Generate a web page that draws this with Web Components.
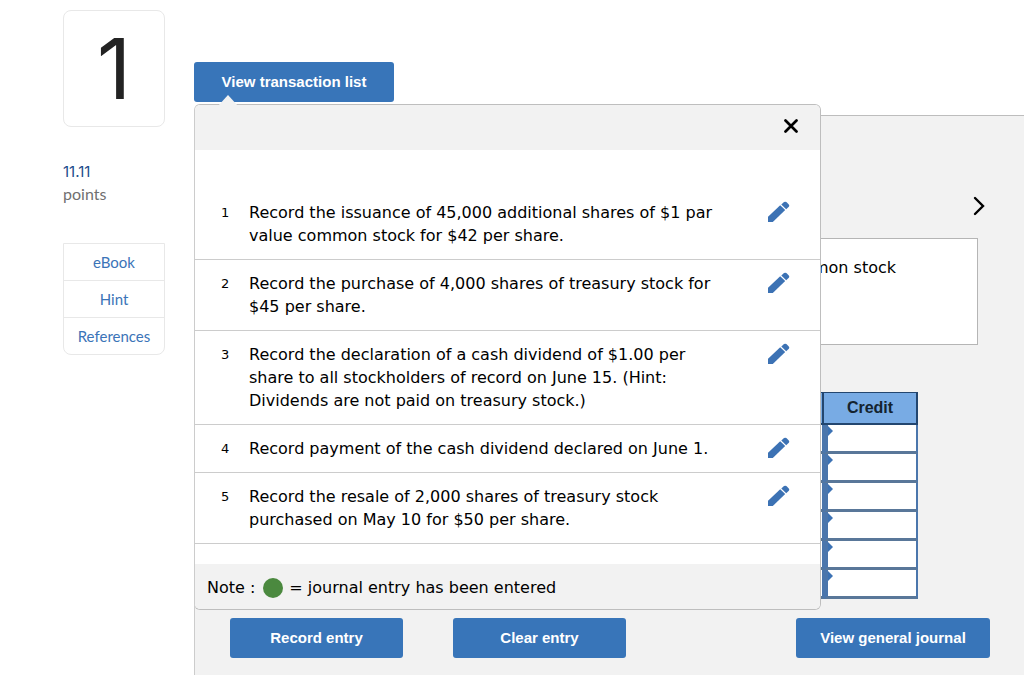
<!DOCTYPE html>
<html lang="en">
<head>
<meta charset="utf-8">
<meta name="viewport" content="width=device-width, initial-scale=1">
<title>General journal</title>
<style>
  body { margin: 0; background: #fff; color: #000; font: 16px/23px "DejaVu Sans", sans-serif; }
</style>
</head>
<body>
<question-page>
  <question-sidebar slot="side" number="1" points="11.11"></question-sidebar>
  <action-button slot="trigger" style="--w:200px">View transaction list</action-button>
  <transaction-popover slot="trigger">
    <transaction-item number="1">Record the issuance of 45,000 additional shares of $1 par value common stock for $42 per share.</transaction-item>
    <transaction-item number="2">Record the purchase of 4,000 shares of treasury stock for $45 per share.</transaction-item>
    <transaction-item number="3">Record the declaration of a cash dividend of $1.00 per share to all stockholders of record on June 15. (Hint: Dividends are not paid on treasury stock.)</transaction-item>
    <transaction-item number="4">Record payment of the cash dividend declared on June 1.</transaction-item>
    <transaction-item number="5">Record the resale of 2,000 shares of treasury stock purchased on May 10 for $50 per share.</transaction-item>
  </transaction-popover>
  <journal-panel>
    <span slot="prompt">common stock</span>
    <action-button slot="actions" style="--w:173px">Record entry</action-button>
    <action-button slot="actions" style="--w:173px">Clear entry</action-button>
    <action-button slot="actions" style="--w:194px; margin-left:auto">View general journal</action-button>
  </journal-panel>
</question-page>

<script>
class BaseElement extends HTMLElement {
  constructor() {
    super();
    this.attachShadow({ mode: "open" });
  }
  connectedCallback() {
    this.shadowRoot.innerHTML = this.render();
  }
}

customElements.define("question-page", class extends BaseElement {
  render() {
    return `<style>
      :host { display: grid; grid-template-columns: 194px minmax(0, 1fr); min-height: 100vh; }
      main { display: flex; flex-direction: column; }
      .bar { position: relative; height: 53px; padding-top: 62px; z-index: 1; }
    </style>
    <slot name="side"></slot>
    <main><div class="bar"><slot name="trigger"></slot></div><slot></slot></main>`;
  }
});

customElements.define("action-button", class extends BaseElement {
  render() {
    return `<style>
      :host { display: block; width: var(--w); }
      button { display: block; width: 100%; height: 40px; padding: 0; border: 0; border-radius: 3px;
        background: #3875b9; color: #fff; font: bold 15px/40px "Liberation Sans", sans-serif; cursor: pointer; }
    </style><button type="button"><slot></slot></button>`;
  }
});

customElements.define("question-sidebar", class extends BaseElement {
  render() {
    return `<style>
      :host { display: block; padding: 10px 29px 0 63px; font: 15px/22px Lato, sans-serif; }
      .number { display: grid; place-items: center; height: 115px; border: 1px solid #e8e8e8; border-radius: 8px;
        color: #232323; font: 84px/115px Inter, sans-serif; }
      .points { margin: 34px 0 38px; font-size: 16px; color: #707070; }
      .points b { display: block; font: 15px/22px Inter, sans-serif; color: #1c4c8c; }
      nav { border: 1px solid #e8e8e8; border-radius: 0 0 8px 8px; text-align: center; }
      a { display: block; line-height: 36px; color: #3b74b8; text-decoration: none; }
      a + a { border-top: 1px solid #e8e8e8; }
    </style>
    <div class="number">${this.getAttribute("number")}</div>
    <div class="points"><b>${this.getAttribute("points")}</b>points</div>
    <nav><a href="#ebook">eBook</a><a href="#hint">Hint</a><a href="#references">References</a></nav>`;
  }
});

customElements.define("transaction-popover", class extends BaseElement {
  render() {
    return `<style>
      :host { display: block; position: absolute; top: 104px; left: 0; box-sizing: border-box; width: 627px;
        background: #fff; border: 1px solid #bebebe; border-left-color: #ccc; border-radius: 6px; }
      .tip { position: absolute; left: 23px; top: -10px; display: block; }
      header { display: flex; justify-content: flex-end; height: 45px; background: #f2f2f2; border-radius: 5px 5px 0 0; }
      header button { width: 58px; height: 41px; padding: 0; border: 0; background: none; display: grid; place-items: center; }
      .list { padding: 39px 0 20px; }
      footer { display: flex; align-items: center; height: 45px; padding: 2px 12px 0; box-sizing: border-box;
        background: #f2f2f2; border-radius: 0 0 5px 5px; }
      i { width: 20px; height: 20px; margin: 0 6px 0 8px; border-radius: 50%; background: #4b893f; }
    </style>
    <svg class="tip" width="20" height="11"><path d="M0 11L10 0L20 11Z" fill="#f2f2f2"/></svg>
    <header><button type="button" aria-label="Close"><svg width="14" height="14" viewBox="0 0 14 14"><path d="M1.5 1.5l11 11M12.5 1.5l-11 11" stroke="#000" stroke-width="2.7" stroke-linecap="round"/></svg></button></header>
    <div class="list"><slot></slot></div>
    <footer><span>Note :</span><i></i><span>= journal entry has been entered</span></footer>`;
  }
});

customElements.define("transaction-item", class extends BaseElement {
  render() {
    return `<style>
      :host { display: grid; grid-template-columns: 28px 484px 1fr; padding: 12px 25px 12px 26px; border-bottom: 1px solid #ccc; }
      .n { font-size: 13px; }
      button { justify-self: end; width: 22px; height: 22px; padding: 0; border: 0; background: none; margin-right: 5px; }
      svg { display: block; }
    </style>
    <span class="n">${this.getAttribute("number")}</span><span><slot></slot></span>
    <button type="button" aria-label="Edit"><svg width="22" height="22" viewBox="0 0 22 22" fill="#3c72b4"><path d="M0 15.8L12.2 4.2L17.2 9L4.8 21H0Z"/><path d="M13.3 3.6L16 1.1Q17.2.2 18.4 1.1L20.8 3.5Q21.8 4.8 20.8 5.8L18.2 8.3Z"/></svg></button>`;
  }
});

customElements.define("journal-panel", class extends BaseElement {
  render() {
    const row = "<tr><td></td><td></td><td></td><td></td></tr>";
    return `<style>
      :host { display: block; flex: 1; box-sizing: border-box; padding: 0 34px 17px 35px; background: #f2f2f2;
        border-top: 1px solid #bdbdbd; border-left: 1px solid #ccc; }
      .nav { display: flex; justify-content: flex-end; padding-top: 80px; height: 42px; }
      .nav button { width: 22px; height: 22px; padding: 0; border: 0; background: none; }
      .prompt { height: 105px; margin-right: 12px; border: 1px solid #b5b5b5; background: #fff; }
      .prompt p { margin: 0; padding: 17px 81px 17px 29px; text-align: right; }
      table { width: 688px; margin: 47px 0 19px; border-collapse: separate; border-spacing: 0; table-layout: fixed; }
      th { height: 33px; padding: 0; box-sizing: border-box; border: solid #23466f; border-width: 1px 2px 2px 0; background: #78abe4;
        color: #14232f; font: bold 16px/28px "Liberation Sans", sans-serif; }
      td { position: relative; height: 29px; padding: 0; box-sizing: border-box; border: solid #4b76ac; border-width: 0 2px 3px 4px;
        border-bottom-color: #597799; background: #fff; }
      td::before { content: ""; position: absolute; left: 0; top: 1px; border: solid transparent; border-width: 5px 0 5px 5px; border-left-color: #3c72b4; }
      .credit { width: 94px; }
      .actions { display: flex; gap: 50px; }
    </style>
    <div class="nav"><button type="button" aria-label="Next"><svg width="12" height="20" viewBox="0 0 12 20"><path d="M2 2l8 8-8 8" fill="none" stroke="#000" stroke-width="2.4" stroke-linecap="round"/></svg></button></div>
    <div class="prompt"><p><slot name="prompt"></slot></p></div>
    <table><colgroup><col><col><col><col class="credit"></colgroup>
      <thead><tr><th></th><th></th><th></th><th scope="col">Credit</th></tr></thead>
      <tbody>${row.repeat(6)}</tbody></table>
    <div class="actions"><slot name="actions"></slot></div>`;
  }
});
</script>
</body>
</html>
